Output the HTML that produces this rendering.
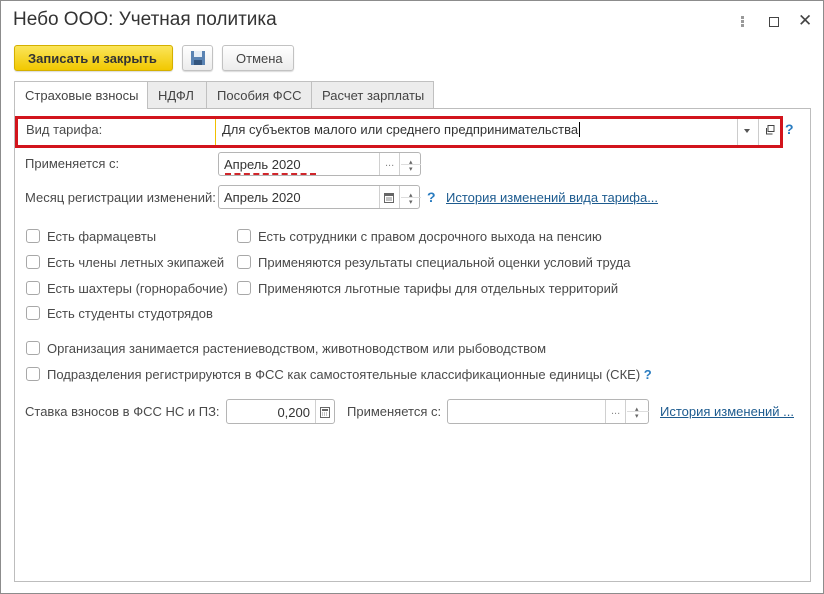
<!DOCTYPE html>
<html><head><meta charset="utf-8"><style>
*{box-sizing:border-box;margin:0;padding:0}
body{width:824px;height:594px;background:#fff;font-family:"Liberation Sans",Arial,sans-serif;color:#4a4a4a;font-size:13px;position:relative;overflow:hidden;border:1px solid #8c8c8c}
.a{position:absolute;white-space:nowrap}
.inp{position:absolute;border:1px solid #b5b5b5;border-radius:3px;background:#fff}
.cb{position:absolute;width:14px;height:14px;border:1px solid #a8a8a8;border-radius:3px;background:#fff}
.lnk{color:#1d5b8f;text-decoration:underline}
.q{color:#2a7cc0;font-weight:bold}
.btn{position:absolute;border:1px solid #c2c2c2;border-radius:3px;background:linear-gradient(#fff,#ececec);box-shadow:0 1px 1px rgba(0,0,0,.15)}
.tab{position:absolute;top:80px;height:27px;border:1px solid #c0c0c0;border-bottom:none;background:#ececec;padding:6px 0 0 10px;color:#444}
.vd{position:absolute;top:0;bottom:0;width:1px;background:#d0d0d0}
</style></head><body>
<div class="a" style="left:12px;top:8px;font-size:19px;color:#333">Небо ООО: Учетная политика</div>
<div class="a" style="left:740px;top:15px;width:3px;line-height:0">
<div style="width:3px;height:3px;background:#999;margin-bottom:1px"></div><div style="width:3px;height:3px;background:#999;margin-bottom:1px"></div><div style="width:3px;height:3px;background:#999"></div></div>
<div class="a" style="left:768px;top:16px;width:10px;height:10px;border:1px solid #444"></div>
<div class="a" style="left:797px;top:10px;font-size:17px;color:#444">✕</div>

<div class="btn" style="left:13px;top:44px;width:159px;height:26px;background:linear-gradient(#fbe55a,#f1c800);border-color:#d4b000;color:#333;font-weight:bold;font-size:13px;padding:5px 0 0 13px">Записать и закрыть</div>
<div class="btn" style="left:181px;top:44px;width:31px;height:26px">
<svg width="16" height="16" style="position:absolute;left:7px;top:4px"><rect x="1" y="1" width="14" height="14" fill="#5a83b3"/><rect x="4" y="1" width="8" height="6" fill="#e6eef6"/><rect x="4" y="10" width="8" height="5" fill="#33557e"/></svg></div>
<div class="btn" style="left:221px;top:44px;width:72px;height:26px;padding:5px 0 0 13px;color:#444">Отмена</div>

<div class="tab" style="left:13px;width:134px;background:#fff;z-index:2;height:28px">Страховые взносы</div>
<div class="tab" style="left:146px;width:60px">НДФЛ</div>
<div class="tab" style="left:205px;width:106px">Пособия ФСС</div>
<div class="tab" style="left:310px;width:123px">Расчет зарплаты</div>
<div class="a" style="left:13px;top:107px;width:797px;height:474px;border:1px solid #bdbdbd"></div>

<div class="a" style="left:14px;top:115px;width:768px;height:32px;border:3px solid #d2141c"></div>
<div class="a" style="left:25px;top:121px">Вид тарифа:</div>
<div class="a" style="left:214px;top:118px;width:1px;height:26px;background:#f0c000"></div>
<div class="a" style="left:221px;top:121px;color:#333">Для субъектов малого или среднего предпринимательства<span style="border-left:1px solid #000;margin-left:1px"></span></div>
<div class="a" style="left:736px;top:118px;width:1px;height:26px;background:#ccc"></div>
<div class="a" style="left:757px;top:118px;width:1px;height:26px;background:#ccc"></div>
<div class="a" style="left:743px;top:128px;border:3px solid transparent;border-top:4px solid #555"></div>
<svg class="a" style="left:763px;top:123px" width="12" height="12"><rect x="4" y="1.5" width="6" height="6" fill="none" stroke="#444"/><path d="M2.5 4v6h6" fill="none" stroke="#444"/></svg>
<div class="a q" style="left:784px;top:120px;font-size:14px">?</div>

<div class="a" style="left:24px;top:155px">Применяется с:</div>
<div class="inp" style="left:217px;top:151px;width:203px;height:24px">
<div class="vd" style="left:160px"></div><div class="vd" style="left:180px"></div>
<div class="a" style="left:5px;top:4px;color:#333">Апрель 2020</div>
<div class="a" style="left:6px;top:20px;width:91px;border-top:2px dashed #d0262b"></div>
<div class="a" style="left:166px;top:4px;color:#888;font-size:11px">...</div>
<div class="a" style="left:190px;top:5px;font-size:7px;color:#666">▴</div><div class="a" style="left:190px;top:12px;font-size:7px;color:#666">▾</div>
<div class="a" style="left:182px;top:11px;width:20px;height:1px;background:#ddd"></div></div>

<div class="a" style="left:24px;top:189px">Месяц регистрации изменений:</div>
<div class="inp" style="left:217px;top:184px;width:202px;height:24px">
<div class="vd" style="left:160px"></div><div class="vd" style="left:180px"></div>
<div class="a" style="left:5px;top:4px;color:#333">Апрель 2020</div>
<svg class="a" style="left:165px;top:7px" width="10" height="10"><rect x=".5" y=".5" width="9" height="9" fill="#fff" stroke="#666"/><rect x="0" y="0" width="10" height="3" fill="#666"/><path d="M2 5h6M2 7h6" stroke="#888"/></svg>
<div class="a" style="left:190px;top:5px;font-size:7px;color:#666">▴</div><div class="a" style="left:190px;top:12px;font-size:7px;color:#666">▾</div>
<div class="a" style="left:182px;top:11px;width:20px;height:1px;background:#ddd"></div></div>
<div class="a q" style="left:426px;top:188px;font-size:14px">?</div>
<div class="a lnk" style="left:445px;top:189px">История изменений вида тарифа...</div>

<div class="cb" style="left:25px;top:228px"></div><div class="a" style="left:46px;top:228px">Есть фармацевты</div>
<div class="cb" style="left:25px;top:254px"></div><div class="a" style="left:46px;top:254px">Есть члены летных экипажей</div>
<div class="cb" style="left:25px;top:280px"></div><div class="a" style="left:46px;top:280px">Есть шахтеры (горнорабочие)</div>
<div class="cb" style="left:25px;top:305px"></div><div class="a" style="left:46px;top:305px">Есть студенты студотрядов</div>
<div class="cb" style="left:236px;top:228px"></div><div class="a" style="left:257px;top:228px">Есть сотрудники с правом досрочного выхода на пенсию</div>
<div class="cb" style="left:236px;top:254px"></div><div class="a" style="left:257px;top:254px">Применяются результаты специальной оценки условий труда</div>
<div class="cb" style="left:236px;top:280px"></div><div class="a" style="left:257px;top:280px">Применяются льготные тарифы для отдельных территорий</div>
<div class="cb" style="left:25px;top:340px"></div><div class="a" style="left:46px;top:340px">Организация занимается растениеводством, животноводством или рыбоводством</div>
<div class="cb" style="left:25px;top:366px"></div><div class="a" style="left:46px;top:366px">Подразделения регистрируются в ФСС как самостоятельные классификационные единицы (СКЕ) <span class="q">?</span></div>

<div class="a" style="left:24px;top:403px">Ставка взносов в ФСС НС и ПЗ:</div>
<div class="inp" style="left:225px;top:398px;width:109px;height:25px">
<div class="vd" style="left:88px"></div>
<div class="a" style="right:24px;top:5px;color:#333">0,200</div>
<svg class="a" style="left:93px;top:7px" width="10" height="11"><rect x=".5" y=".5" width="9" height="10" fill="#fff" stroke="#666"/><rect x="2" y="2" width="6" height="2" fill="#666"/><path d="M2 6h6M2 8h6" stroke="#888" stroke-dasharray="1 1"/></svg></div>
<div class="a" style="left:346px;top:403px">Применяется с:</div>
<div class="inp" style="left:446px;top:398px;width:202px;height:25px">
<div class="vd" style="left:157px"></div><div class="vd" style="left:177px"></div>
<div class="a" style="left:163px;top:5px;color:#888;font-size:11px">...</div>
<div class="a" style="left:187px;top:5px;font-size:7px;color:#666">▴</div><div class="a" style="left:187px;top:12px;font-size:7px;color:#666">▾</div>
<div class="a" style="left:179px;top:11px;width:22px;height:1px;background:#ddd"></div></div>
<div class="a lnk" style="left:659px;top:403px">История изменений ...</div>
</body></html>
